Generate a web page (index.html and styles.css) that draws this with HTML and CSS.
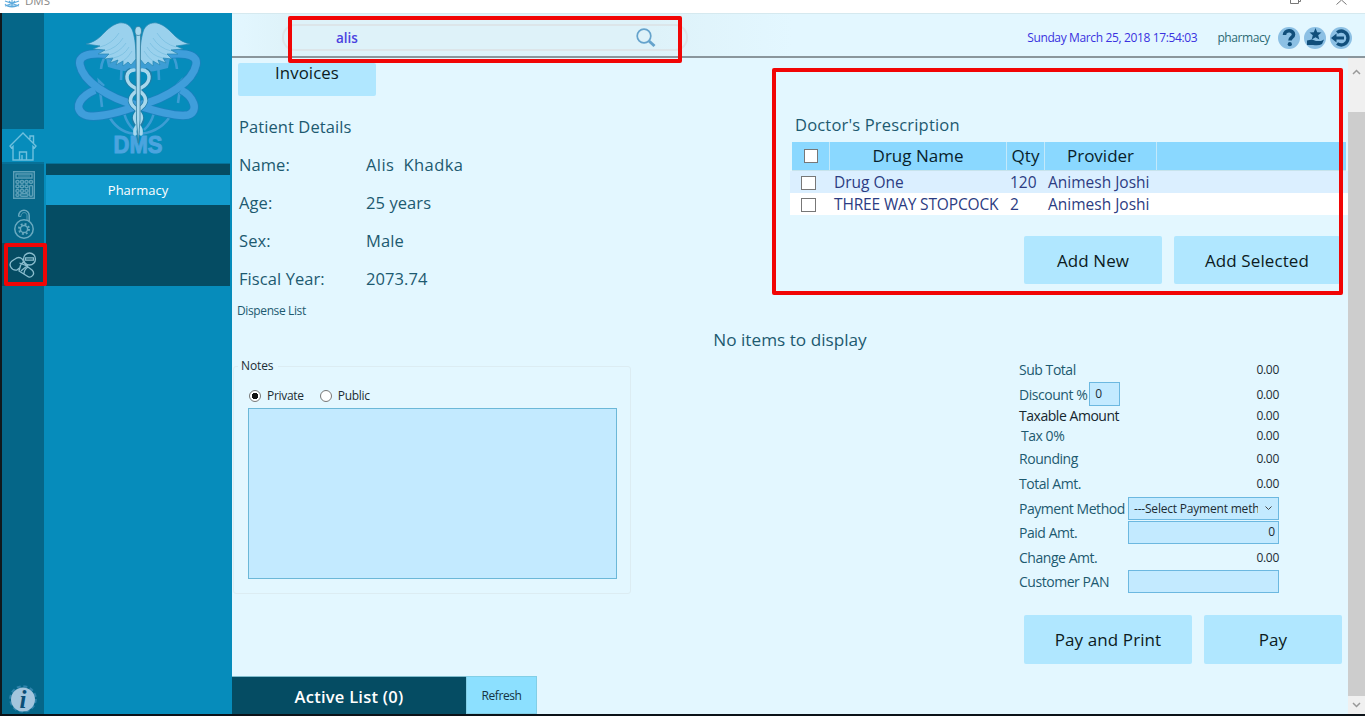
FILE: index.html
```html
<!DOCTYPE html>
<html lang="en">
<head>
<meta charset="utf-8">
<title>DMS</title>
<link rel="stylesheet" href="styles.css">
</head>
<body>
<div class="window">
  <div class="titlebar">
    <svg class="app-icon" width="16" height="8" viewBox="0 0 16 8" fill="none" stroke="#5ba9dc" stroke-width="1.1"><path d="M1 1 15 6M15 1 1 6M5 1 8 4 11 1M1 4C4 8 12 8 15 4M8 0v6M4 6h8"/></svg>
    <span class="app-name">DMS</span>
    <svg class="win-buttons" width="60" height="6" viewBox="0 0 60 6" fill="none" stroke="#777" stroke-width="1"><path d="M.5 0V3.500H8.500V0M8.500 1.500H10.500V0M46.500 4.500 51.500 0 56.500 4.500"/></svg>
  </div>
  <div class="app">
    <nav class="rail">
      <div class="rail-item home"><svg width="28" height="30" viewBox="0 0 28 30" fill="none" stroke="#6fc0de" stroke-width="1.4"><path d="M1 15 14 2 27 15 25.500 17 24 15.500V29H4V15.500L2.500 17ZM21 8V5H24.500V12M10.500 29V21H17.500V29M13 24V29"/></svg></div>
      <div class="rail-item calc"><svg width="22" height="28" viewBox="0 0 22 28" fill="none" stroke="#5c9fb7" stroke-width="1.400"><path d="M.7.7H21.300V27.300H.7ZM3 3H19V7H3Z"/><path d="M5 5H17" stroke-width="1"/><g stroke-width="1.500"><rect x="3" y="9.500" width="3" height="2.800" rx="1"/><rect x="7.500" y="9.500" width="3" height="2.800" rx="1"/><rect x="12" y="9.500" width="3" height="2.800" rx="1"/><rect x="16.500" y="9.500" width="3" height="2.800" rx="1"/><rect x="3" y="14" width="3" height="2.800" rx="1"/><rect x="7.500" y="14" width="3" height="2.800" rx="1"/><rect x="12" y="14" width="3" height="2.800" rx="1"/><rect x="3" y="18.500" width="3" height="2.800" rx="1"/><rect x="7.500" y="18.500" width="3" height="2.800" rx="1"/><rect x="12" y="18.500" width="3" height="2.800" rx="1"/><rect x="3" y="22.700" width="3" height="2.500" rx="1"/><rect x="7.500" y="22.700" width="7.500" height="2.500" rx="1"/><rect x="16.500" y="14.500" width="3" height="10.700" rx="1"/></g></svg></div>
      <div class="rail-item lock"><svg width="22" height="30" viewBox="0 0 22 30" fill="none" stroke="#6aaac0" stroke-width="1.500"><circle cx="11" cy="20" r="9.200"/><circle cx="11" cy="20" r="3.600"/><circle cx="11" cy="20" r="5" stroke-width="2" stroke-dasharray="1.900 2.027"/><path d="M5.700 7.500V6.500A5.200 5.200 0 0 1 16.200 6.500V12"/><path d="M5.700 7.500H8C8 2.500 14 2.500 14 6.500V11" stroke-width=".8"/></svg></div>
      <div class="rail-item pills"><svg width="28" height="28" viewBox="0 0 28 28" fill="none" stroke="#8bbdce" stroke-width="1.300"><circle cx="20.500" cy="8" r="6"/><path d="M16.500 6.800h8v2.300h-8z"/><path d="M11 16.500 8 19C2 20-1 13 3 10L6 8C10 5 14 7 14.500 11L19 16 23 19C27 23 22 28 18 25L10 20ZM11 17C11 14 13 11 16 11M19 16C16 18 15 20 15 23M10.500 12 18 15M12 20C14 18 17 16 19 14"/></svg></div>
      <div class="rail-info"><svg width="28" height="28" viewBox="0 0 28 28"><circle cx="14" cy="14" r="12.800" fill="none" stroke="#2f83ab" stroke-width="2" stroke-dasharray="4 2.700"/><circle cx="14" cy="14.500" r="12" fill="#a3c5dd"/><text x="14" y="23" class="info-i">i</text></svg></div>
      <span class="mark mark-rail"></span>
    </nav>
    <aside class="side">
      <div class="logo">
        <svg width="128" height="144" viewBox="0 0 128 144">
          <g fill="none" stroke="#3d9dd4" stroke-width="2.600">
            <path d="M35 38Q28 43 27 54M48 45 47 65M84 45 85 65M96 38Q102 43 103 54M28 92 25 66 30 71M104 88 107 66 102 71M36 103Q46 119 64 119Q84 118 95 103M50 98Q53 109 60 115M80 98Q77 109 70 115"/>
          </g>
          <path d="M31 38Q64 52 97 38L94 53Q64 62 34 52Z" fill="#3d9dd4"/>
          <g fill="none" stroke="#1c80bd" stroke-width="9"><path d="M47 42C23 36 3 38 6 50C9 66 34 83 62 90C84 97 104 102 114 100C126 96 119 81 107 75"/><path d="M81 42C105 36 125 38 122 50C119 66 94 83 66 90C44 98 18 105 9 99C-1 92 7 81 21 75"/></g>
          <g fill="none" stroke="#3f9edb" stroke-width="7.500"><path d="M47 42C23 36 3 38 6 50C9 66 34 83 62 90C84 97 104 102 114 100C126 96 119 81 107 75"/><path d="M81 42C105 36 125 38 122 50C119 66 94 83 66 90C44 98 18 105 9 99C-1 92 7 81 21 75"/></g>
          <g fill="#9ad1ed" stroke="#2788b2" stroke-width=".7"><path d="M62 44C62 32 61 24 59 17C57 10 51 7 45 8C37 10 32 16 27 21C23 25 17 28 12 29L26 31 19 34 31 35 24 39 35 39 30 44 39 43 36 48 44 45 42 50 49 46 49 51 54 47 57 50Z"/><path d="M66 44C66 32 67 24 69 17C71 10 77 7 83 8C91 10 96 16 101 21C105 25 111 28 116 29L102 31 109 34 97 35 104 39 93 39 98 44 89 43 92 48 84 45 86 50 79 46 79 51 74 47 71 50Z"/></g>
          <g fill="none" stroke="#6fb9dc" stroke-width=".6"><path d="M45 18Q38 29 26 32M49 23Q43 33 31 36M52 28Q46 37 35 40M55 32Q50 41 39 43M58 36Q54 43 49 46M83 18Q90 29 102 32M79 23Q85 33 97 36M76 28Q82 37 93 40M73 32Q78 41 89 43M70 36Q74 43 79 46"/></g>
          <text x="64" y="137.500" class="logo-text" textLength="49" lengthAdjust="spacingAndGlyphs">DMS</text>
          <g fill="none" stroke="#217da7" stroke-width="5"><path d="M57 55C50 58 51 66 58 71C68 77 76 83 69 91C60 99 57 104 64 112M71 55C78 58 77 66 70 71C60 77 52 83 59 91C68 99 71 104 64 112"/></g>
          <g fill="none" stroke="#a7d8ed" stroke-width="3.500" stroke-linecap="round"><path d="M60 55C51 56 51 66 58 71C68 77 76 83 69 91C60 99 58 103 64 110Q68 114 67 119M68 55C77 56 77 66 70 71C60 77 52 83 59 91C68 99 70 103 64 110Q60 114 61 119"/></g>
          <path d="M62 17H66.500L66 105 64.300 128 62.500 105Z" fill="#a7d8ed" stroke="#347e9e" stroke-width=".8"/><ellipse cx="64.200" cy="16" rx="3.300" ry="4.500" fill="#a7d8ed" stroke="#347e9e" stroke-width=".8"/>
        </svg>
      </div>
      <div class="submenu"><a class="submenu-item">Pharmacy</a></div>
    </aside>
    <main class="main">
      <header class="header">
        <div class="search"><span class="query">alis</span>
          <svg width="20" height="20" viewBox="0 0 20 20" fill="none" stroke="#65a3cc"><circle cx="8" cy="8" r="6.800" stroke-width="1.700"/><path d="M13 13 18.500 18" stroke-width="3"/></svg>
          <span class="mark mark-search"></span></div>
        <span class="clock">Sunday March 25, 2018 17:54:03</span>
        <span class="user">pharmacy</span>
        <div class="tools">
          <svg width="22" height="22" viewBox="0 0 22 22"><circle cx="11" cy="11" r="11" fill="#8cc0e4"/><path d="M6.500 8C6.500 2.500 15.500 2.500 15.500 7.500C15.500 10.500 12 10.300 12 13.500" fill="none" stroke="#114f7b" stroke-width="3.600"/><circle cx="11.800" cy="17.200" r="2.100" fill="#114f7b"/></svg>
          <svg width="22" height="22" viewBox="0 0 22 22"><circle cx="11" cy="11" r="11" fill="#8cc0e4"/><path d="M11.500 1 13.200 5.200 17.500 5.500 14.200 8.200 15.300 12.500 11.500 10.200 7.700 12.500 8.800 8.200 5.500 5.500 9.800 5.200ZM3 13.500 8 12.500 12 14H17L20 12.500 18 17Q15 19 9 18H3Z" fill="#114f7b"/></svg>
          <svg width="22" height="22" viewBox="0 0 22 22"><circle cx="11" cy="11" r="11" fill="#8cc0e4"/><path d="M7 5.500C12 2 18 5.500 18 11C18 16.500 12 20 7 16.500" fill="none" stroke="#114f7b" stroke-width="3.300"/><path d="M1 11 6.500 6.500V9.500H14V12.500H6.500V15.500Z" fill="#114f7b"/></svg>
        </div>
      </header>
      <div class="body">
        <div class="content">
          <section class="top">
            <div class="patient">
              <button class="btn invoices">Invoices</button>
              <div class="details">
                <span class="wide">Patient Details</span>
                <span>Name:</span><span class="pname">Alis&nbsp; Khadka</span>
                <span>Age:</span><span>25 years</span>
                <span>Sex:</span><span>Male</span>
                <span>Fiscal Year:</span><span>2073.74</span>
              </div>
            </div>
            <div class="rx">
              <h2 class="rx-title">Doctor's Prescription</h2>
              <div class="rx-row rx-head"><span><i class="check"></i></span><span>Drug Name</span><span>Qty</span><span>Provider</span><span></span></div>
              <div class="rx-row rx-line alt"><span><i class="check"></i></span><span>Drug One</span><span>120</span><span>Animesh Joshi</span></div>
              <div class="rx-row rx-line"><span><i class="check"></i></span><span class="caps">THREE WAY STOPCOCK</span><span>2</span><span>Animesh Joshi</span></div>
              <div class="rx-actions"><button class="btn add-new">Add New</button><button class="btn add-sel">Add Selected</button></div>
              <span class="mark mark-rx"></span>
            </div>
          </section>
          <div class="dispense">Dispense List</div>
          <div class="empty">No items to display</div>
          <section class="bottom">
            <div class="notes">
              <span class="legend">Notes</span>
              <div class="radios"><i class="radio on"></i><span>Private</span><i class="radio"></i><span>Public</span></div>
              <div class="note-area"></div>
            </div>
            <div class="bill">
              <div class="bill-row r1"><span>Sub Total</span><b>0.00</b></div>
              <div class="bill-row r2"><span>Discount %</span><i class="field disc">0</i><b>0.00</b></div>
              <div class="bill-row r3"><span class="dark">Taxable Amount</span><b>0.00</b></div>
              <div class="bill-row r4"><span class="tax">Tax 0%</span><b>0.00</b></div>
              <div class="bill-row r5"><span>Rounding</span><b>0.00</b></div>
              <div class="bill-row r5"><span>Total Amt.</span><b>0.00</b></div>
              <div class="bill-row r5"><span>Payment Method</span><i class="field select"><span class="chosen">---Select Payment method---</span><svg width="7" height="5" viewBox="0 0 7 5" fill="none" stroke="#444"><path d="M.5.500 3.500 3.500 6.500.500"/></svg></i></div>
              <div class="bill-row r5"><span>Paid Amt.</span><i class="field paid">0</i></div>
              <div class="bill-row r5"><span>Change Amt.</span><b>0.00</b></div>
              <div class="bill-row r5"><span>Customer PAN</span><i class="field pan"></i></div>
              <div class="pay-actions"><button class="btn pay-print">Pay and Print</button><button class="btn pay">Pay</button></div>
            </div>
          </section>
          <footer class="footer"><div class="active-list">Active List (0)</div><button class="refresh">Refresh</button></footer>
        </div>
        <div class="scrollbar">
          <svg width="9" height="6" viewBox="0 0 9 6" fill="none" stroke="#999" stroke-width="1.500"><path d="M1 5 4.500 1.500 8 5"/></svg>
          <div class="thumb"></div>
          <svg width="9" height="6" viewBox="0 0 9 6" fill="none" stroke="#999" stroke-width="1.500"><path d="M1 1 4.500 4.500 8 1"/></svg>
        </div>
      </div>
    </main>
  </div>
</div>
</body>
</html>
```
FILE: styles.css
```css
* { box-sizing: border-box; }
body { margin: 0; font-family: "Open Sans", "Noto Sans", sans-serif; color: #1d5a70; overflow: hidden; }
button { font-family: inherit; border: 0; padding: 0; margin: 0; }
i { font-style: normal; }
svg { display: block; flex: none; }
.window { width: 1365px; height: 716px; display: flex; flex-direction: column; background: #fff; border-bottom: 2px solid #0b1218; overflow: hidden; }
.titlebar { height: 13px; display: flex; align-items: flex-start; padding-left: 4px; overflow: hidden; }
.app-name { font-size: 11.5px; line-height: 14px; margin: -6px 0 0 5px; color: #888; }
.win-buttons { margin-left: auto; margin-right: 15px; }
.app { flex: 1; display: flex; border-left: 2px solid #10181c; min-height: 0; }

.rail { width: 42px; background: #056688; padding-top: 116px; display: flex; flex-direction: column; position: relative; flex: none; }
.rail-item { display: flex; align-items: center; justify-content: center; }
.home { height: 35px; background: #068cbb; border-bottom: 2px solid #067198; }
.calc { height: 41px; padding-top: 1px; padding-left: 2px; }
.lock { height: 38px; padding-left: 2px; }
.pills { height: 43px; background: #054c63; }
.rail-info { margin-top: auto; height: 29px; padding-left: 7px; }
.info-i { font: italic bold 25px "Liberation Serif", serif; fill: #0b4f78; text-anchor: middle; }
.mark { position: absolute; border: 4px solid #f10505; pointer-events: none; border-radius: 2px; }
.mark-rail { left: 2px; top: 230px; width: 43px; height: 43px; z-index: 2; }

.side { width: 188px; background: #068cbb; flex: none; }
.logo { height: 150px; padding: 2px 0 0 30px; }
.logo-text { font: bold 24px "Liberation Sans", sans-serif; fill: #4ba4df; stroke: #4ba4df; stroke-width: 1px; text-anchor: middle; }
.submenu { margin: 0 2px; height: 123px; background: #054c63; padding-top: 11px; border-top: 1px solid #067198; }
.submenu-item { display: block; height: 30px; background: #129bcd; color: #fff; text-align: center; font-size: 13px; line-height: 30px; }

.main { flex: 1; display: flex; flex-direction: column; background: #e3f7ff; min-width: 0; }
.header { height: 45px; flex: none; border-bottom: 2px solid #8a969c; border-top: 1px solid #d5e9ef; display: flex; align-items: center; padding: 5px 13px 0 50px; background: linear-gradient(90deg, #e3f7ff 0, #def2f9 60px, #def2f9 420px, #e3f7ff 560px); }
.search { width: 406px; height: 27px; border: 2px solid #dce5e9; border-radius: 13px; position: relative; display: flex; align-items: center; justify-content: space-between; padding: 0 30px 0 52px; }
.query { font-size: 13.500px; font-weight: 600; color: #4b42e0; }
.mark-search { left: 4px; top: -10px; width: 394px; height: 47px; }
.clock { margin-left: auto; font-size: 12px; letter-spacing: -.36px; color: #3a32e0; white-space: nowrap; }
.user { margin-left: 20px; font-size: 12px; letter-spacing: -.4px; color: #2c6a74; }
.tools { display: flex; gap: 4px; margin-left: 8px; }

.body { flex: 1; display: flex; min-height: 0; }
.content { flex: 1; display: flex; flex-direction: column; min-width: 0; }
.btn { background: #b0e7ff; color: #0c1b22; font-size: 17px; border-radius: 2px; display: block; letter-spacing: .1px; }
.top { display: flex; justify-content: space-between; height: 240px; padding-left: 6px; flex: none; }
.patient { padding-top: 5px; }
.invoices { width: 138px; height: 33px; line-height: 19px; padding-bottom: 14px; font-size: 16.800px; }
.details { margin-top: 11px; display: grid; grid-template-columns: 127px 180px; grid-auto-rows: 38.100px; align-items: center; font-size: 16.500px; padding-left: 1px; letter-spacing: .08px; }
.pname { letter-spacing: .4px; }
.wide { grid-column: 1 / 3; }
.rx { width: 556px; padding-top: 54px; position: relative; display: flex; flex-direction: column; flex: none; }
.rx-title { margin: 0 0 4px 3px; font-weight: 400; font-size: 16.500px; line-height: 26px; letter-spacing: .18px; }
.rx-row { display: grid; grid-template-columns: 38px 177px 38px 112px 1fr; align-items: center; }
.rx-head { height: 29px; background: #8ad8ff; color: #081e2b; font-size: 17px; margin-right: 2px; border-bottom: 1px solid #c7e3ec; }
.rx-head span { height: 28px; line-height: 28px; border-right: 1px solid #c3e9fa; text-align: center; display: block; }
.rx-head span:last-child { border: 0; }
.rx-line { height: 22px; margin-left: -2px; padding-left: 2px; background: #fff; color: #2c3c82; font-size: 15.500px; grid-template-columns: 42px 176px 38px 1fr; line-height: 23px; white-space: nowrap; }
.caps { letter-spacing: -.15px; }
.alt { background: #dbefff; }
.check { display: block; width: 14px; height: 14px; border: 1px solid #777; background: #fff; }
.rx-head .check { margin: 7px 0 0 12px; }
.rx-line .check { margin-left: 9px; width: 15px; }
.rx-actions { display: flex; gap: 12px; padding: 21px 0 0 232px; }
.rx-actions .btn { height: 48px; }
.add-new { width: 138px; }
.add-sel { width: 166px; }
.mark-rx { left: -20px; top: 10px; width: 571px; height: 227px; }
.dispense { height: 24px; line-height: 26px; font-size: 12px; letter-spacing: -.38px; padding-left: 5px; flex: none; }
.empty { height: 36px; line-height: 36px; text-align: center; font-size: 17.200px; flex: none; }
.bottom { display: flex; justify-content: space-between; height: 318px; flex: none; padding-left: 1px; }
.notes { width: 398px; height: 228px; margin-top: 8px; border: 1px solid #dcecf2; border-radius: 3px; padding: 0 14px 14px; color: #1c2c33; font-size: 12px; letter-spacing: -.3px; }
.legend { display: block; width: 40px; line-height: 16px; margin: -9px 0 0 -10px; padding-left: 3px; background: #e3f7ff; letter-spacing: -.1px; }
.radios { height: 34px; display: flex; align-items: center; padding-top: 9px; }
.radio { width: 12px; height: 12px; border: 1px solid #777; border-radius: 50%; background: #fff; margin: 0 6px 0 1px; }
.radio.on { background: radial-gradient(circle, #111 0 3px, #fff 3.500px); }
.radios span + .radio { margin-left: 16px; }
.note-area { width: 369px; height: 171px; background: #c3eaff; border: 1px solid #6cb8d8; }
.bill { width: 329px; margin-top: -1px; }
.bill-row { display: flex; align-items: center; justify-content: space-between; width: 260px; font-size: 14px; letter-spacing: -.46px; height: 24.600px; white-space: nowrap; }
.bill-row b { font-weight: 400; font-size: 12px; letter-spacing: -.3px; color: #1c2c33; margin-left: auto; }
.r2 { height: 25px; }
.r3 { height: 18px; }
.r4 { height: 22px; }
.dark { color: #15272f; }
.tax { padding-left: 2px; }
.field { display: block; flex: none; height: 23px; border: 1px solid #6cb8e0; background: #c3eaff; font-size: 12px; letter-spacing: -.2px; color: #1c2c33; width: 151px; line-height: 19px; padding: 0 3px; text-align: right; }
.disc { width: 31px; height: 24px; line-height: 22px; text-align: left; padding-left: 5px; margin-left: 2px; }
.select { display: flex; align-items: center; justify-content: space-between; padding: 0 6px 0 5px; }
.chosen { width: 124px; overflow: hidden; text-align: left; line-height: 21px; }
.pay-actions { display: flex; gap: 12px; padding: 21px 0 0 5px; }
.pay-actions .btn { height: 49px; }
.pay-print { width: 168px; }
.pay { width: 138px; }
.footer { display: flex; height: 38px; }
.active-list { width: 234px; background: #054c63; color: #fff; font-weight: 600; font-size: 16.500px; letter-spacing: .25px; text-align: center; line-height: 40px; border-top: 1px solid #82bdcd; }
.refresh { width: 71px; background: #8ce0ff; border: 1px solid #82cfe6; color: #143342; font-size: 12px; letter-spacing: -.4px; }
.scrollbar { width: 17px; background: #f0f0f0; display: flex; flex-direction: column; align-items: center; padding: 11px 0 6px; flex: none; }
.thumb { width: 17px; flex: 1; margin: 37px 0 6px; background: #cdcdcd; }
```
